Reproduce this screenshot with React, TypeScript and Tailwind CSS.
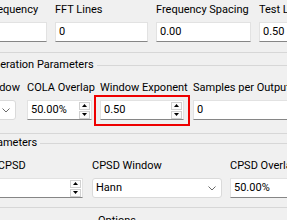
import React from 'react';

function Label({ children }: { children: React.ReactNode }) {
  return <div className="h-[16px] leading-[16px] whitespace-nowrap text-black">{children}</div>;
}

function Triangle({ up }: { up?: boolean }) {
  return (
    <svg width="5" height="3" viewBox="0 0 5 3">
      <path d={up ? 'M0 3 L2.5 0 L5 3 Z' : 'M0 0 L2.5 3 L5 0 Z'} fill="#000" />
    </svg>
  );
}

function LineEdit({ value }: { value: string }) {
  return (
    <div className="h-[20px] bg-white border border-[#e2e2e2] border-b-[#868686] flex items-center pl-[3px] whitespace-nowrap overflow-hidden">
      {value}
    </div>
  );
}

function SpinBox({ value }: { value: string }) {
  return (
    <div className="h-[20px] bg-white border border-[#e2e2e2] border-b-[#868686] flex items-center justify-between pl-[3px] pr-[1px] whitespace-nowrap overflow-hidden">
      <span>{value}</span>
      <div className="flex flex-col gap-[1px]">
        <div className="w-[11px] h-[8px] border border-[#d0d0d0] bg-[#fbfbfb] flex items-center justify-center">
          <Triangle up />
        </div>
        <div className="w-[11px] h-[8px] border border-[#d0d0d0] bg-[#fbfbfb] flex items-center justify-center">
          <Triangle />
        </div>
      </div>
    </div>
  );
}

function ComboBox({ value }: { value: string }) {
  return (
    <div className="h-[20px] bg-white border border-[#dadada] rounded-[3px] flex items-center justify-between pl-[3px] pr-[5px] whitespace-nowrap overflow-hidden">
      <span>{value}</span>
      <svg width="8" height="5" viewBox="0 0 8 5">
        <path d="M0.5 0.5 L4 4 L7.5 0.5" fill="none" stroke="#6a6a6a" strokeWidth="1" />
      </svg>
    </div>
  );
}

function GroupTitle({ title, className }: { title: string; className: string }) {
  return (
    <div className={`flex items-center h-[14px] ${className}`}>
      <span className="whitespace-nowrap leading-[14px] text-black">{title}</span>
      <div className="flex-1 h-px bg-[#d7d7d7] ml-[3px]" />
    </div>
  );
}

export default function App() {
  return (
    <div className="w-[287px] h-[220px] overflow-hidden bg-[#f0f0f0] relative font-[Roboto,sans-serif] text-[11px] text-black">
      {/* Sampling row */}
      <div className="flex mt-[2px] w-[400px]">
        <div className="w-[99px] ml-[-52px] shrink-0 flex flex-col gap-[4px]">
          <Label>Sample Frequency</Label>
          <LineEdit value="" />
        </div>
        <div className="w-[93px] ml-[8px] shrink-0 flex flex-col gap-[4px]">
          <Label>FFT Lines</Label>
          <LineEdit value="0" />
        </div>
        <div className="w-[95px] ml-[8px] shrink-0 flex flex-col gap-[4px]">
          <Label>Frequency Spacing</Label>
          <LineEdit value="0.00" />
        </div>
        <div className="w-[95px] ml-[8px] shrink-0 flex flex-col gap-[4px]">
          <Label>Test Level Ramp Time</Label>
          <LineEdit value="0.50" />
        </div>
      </div>

      <div className="h-px bg-[#d7d7d7] mt-[10px]" />

      {/* Signal generation */}
      <GroupTitle title="Signal Generation Parameters" className="mt-[5px] ml-[-52px]" />
      <div className="flex mt-[8px] w-[400px]">
        <div className="w-[66px] ml-[-50px] shrink-0 flex flex-col gap-[4px]">
          <Label>COLA Window</Label>
          <ComboBox value="Hann" />
        </div>
        <div className="w-[65px] ml-[11px] shrink-0 flex flex-col gap-[4px]">
          <Label>COLA Overlap</Label>
          <SpinBox value="50.00%" />
        </div>
        <div className="w-[84px] ml-[8px] shrink-0 flex flex-col gap-[4px]">
          <Label>Window Exponent</Label>
          <SpinBox value="0.50" />
        </div>
        <div className="w-[107px] ml-[9px] shrink-0 flex flex-col gap-[4px]">
          <Label>Samples per Output</Label>
          <LineEdit value="0" />
        </div>
      </div>

      <div className="h-px bg-[#d7d7d7] mt-[13px]" />

      {/* CPSD */}
      <GroupTitle title="CPSD Parameters" className="mt-[2px] ml-[-50px]" />
      <div className="flex mt-[8px] w-[420px]">
        <div className="w-[136px] ml-[-53px] shrink-0 flex flex-col gap-[4px]">
          <Label>Frames in CPSD</Label>
          <SpinBox value="20" />
        </div>
        <div className="w-[130px] ml-[9px] shrink-0 flex flex-col gap-[4px]">
          <Label>CPSD Window</Label>
          <ComboBox value="Hann" />
        </div>
        <div className="w-[130px] ml-[8px] shrink-0 flex flex-col gap-[4px]">
          <Label>CPSD Overlap</Label>
          <LineEdit value="50.00%" />
        </div>
      </div>

      <div className="h-px bg-[#d7d7d7] mt-[9px]" />

      <div className="mt-[6px] ml-[98px] leading-[14px]">Options</div>

      {/* highlight */}
      <div className="absolute left-[94px] top-[95px] w-[96px] h-[31px] border-2 border-[#ee0000]" />
    </div>
  );
}
